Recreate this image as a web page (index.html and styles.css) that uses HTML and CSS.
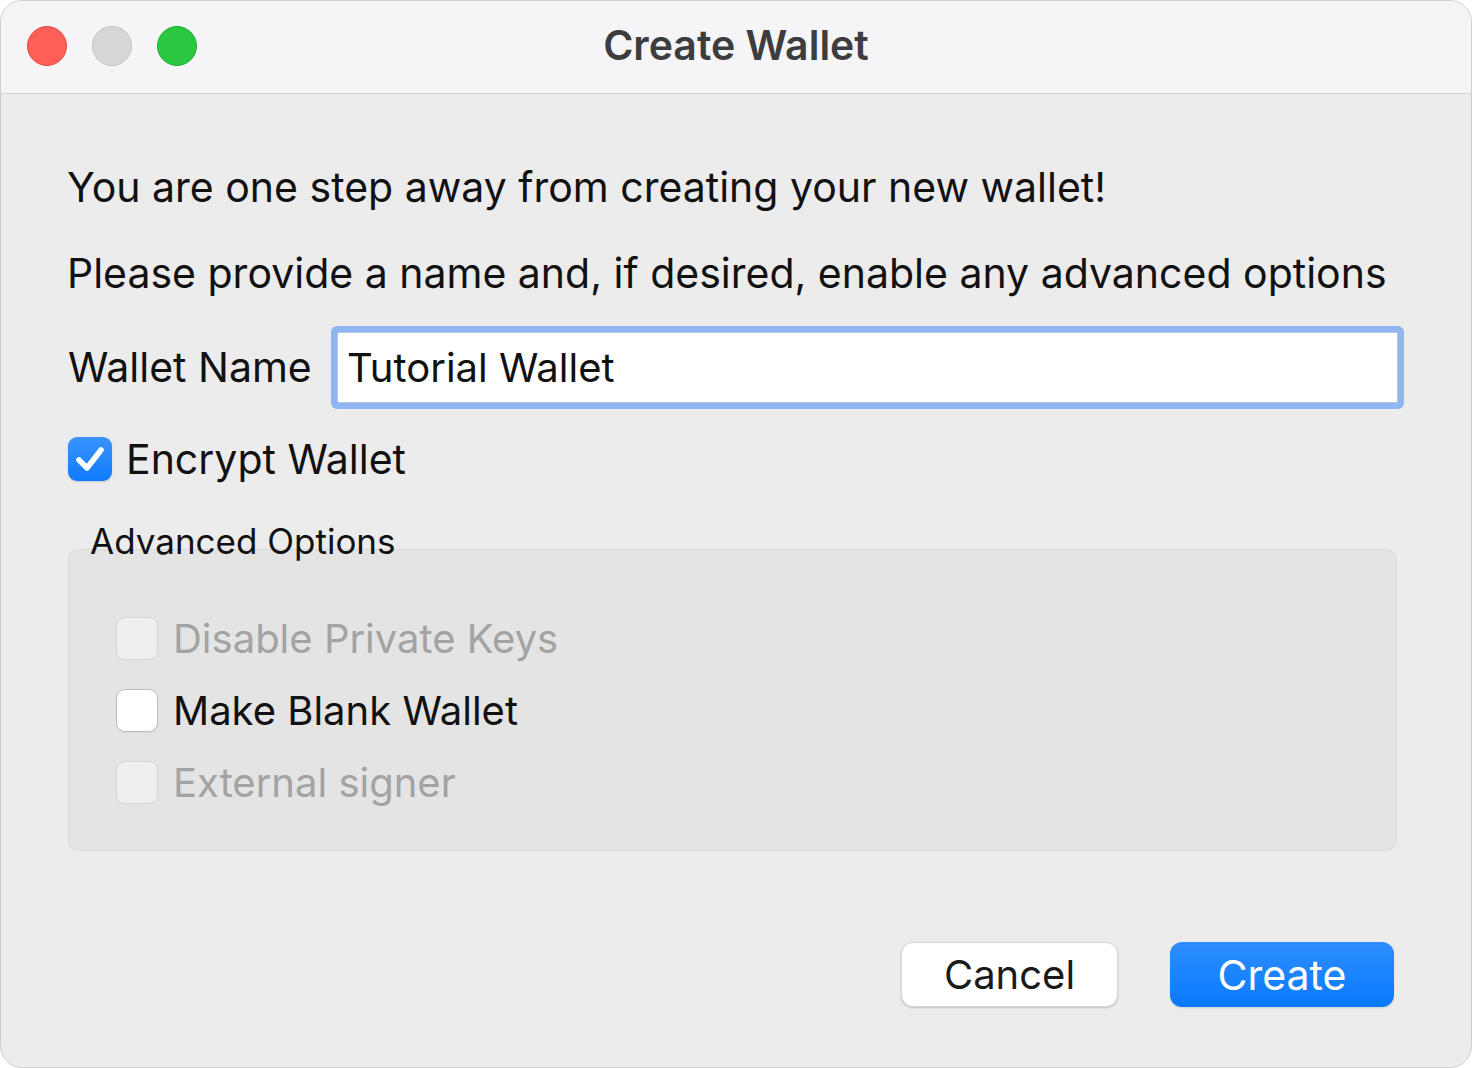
FILE: index.html
```html
<!DOCTYPE html>
<html lang="en">
<head>
<meta charset="utf-8">
<title>Create Wallet</title>
<link rel="stylesheet" href="styles.css">
</head>
<body>
<div class="window">
  <div class="titlebar">
    <div class="lights">
      <span class="light red"></span>
      <span class="light gray"></span>
      <span class="light green"></span>
    </div>
    <div class="title">Create Wallet</div>
  </div>
  <div class="content">
    <p class="line line1">You are one step away from creating your new wallet!</p>
    <p class="line line2">Please provide a name and, if desired, enable any advanced options</p>
    <div class="name-row">
      <span class="label">Wallet Name</span>
      <div class="input"><span class="input-text">Tutorial Wallet</span></div>
    </div>
    <div class="encrypt-row">
      <span class="check checked">
        <svg viewBox="0 0 44 44" width="44" height="44"><path d="M11 23 L19 31 L33 13" fill="none" stroke="#fff" stroke-width="5.5" stroke-linecap="round" stroke-linejoin="round"/></svg>
      </span>
      <span class="check-label">Encrypt Wallet</span>
    </div>
    <div class="group-title">Advanced Options</div>
    <div class="group">
      <div class="opt disabled"><span class="box"></span><span class="opt-label">Disable Private Keys</span></div>
      <div class="opt"><span class="box"></span><span class="opt-label">Make Blank Wallet</span></div>
      <div class="opt disabled"><span class="box"></span><span class="opt-label">External signer</span></div>
    </div>
    <div class="buttons">
      <div class="btn cancel">Cancel</div>
      <div class="btn create">Create</div>
    </div>
  </div>
</div>
</body>
</html>
```

FILE: styles.css
```css
html, body {
  margin: 0;
  padding: 0;
  background: #ffffff;
}
body {
  width: 1472px;
  height: 1068px;
  overflow: hidden;
  font-family: Inter, "Liberation Sans", Arial, sans-serif;
  color: #111;
}
.window {
  box-sizing: border-box;
  width: 1472px;
  height: 1068px;
  border: 1px solid #cfcfcf;
  border-radius: 22px;
  background: #ececec;
  overflow: hidden;
  display: flex;
  flex-direction: column;
}
.titlebar {
  height: 92px;
  flex: 0 0 92px;
  background: #f5f5f7;
  border-bottom: 1px solid #d3d3d3;
  display: flex;
  align-items: center;
  position: relative;
}
.lights {
  display: flex;
  gap: 25px;
  padding-left: 26px;
  padding-bottom: 2px;
}
.light {
  width: 40px;
  height: 40px;
  border-radius: 50%;
  box-sizing: border-box;
}
.red { background: #fe5f57; border: 1px solid #e24b41; }
.gray { background: #d7d7da; border: 1px solid #c3c3c6; }
.green { background: #29c840; border: 1px solid #1fae33; }
.title {
  position: absolute;
  left: 0;
  right: 0;
  top: 0;
  bottom: 4px;
  display: flex;
  align-items: center;
  justify-content: center;
  font-size: 41px;
  font-weight: 600;
  color: #3d3d3f;
  pointer-events: none;
}
.content {
  padding: 69px 74px 0 67px;
  display: flex;
  flex-direction: column;
}
.line {
  margin: 0 0 0 -1px;
  font-size: 41px;
  line-height: 48px;
  color: #111;
}
.line2 { margin-top: 38px; }
.name-row {
  margin-top: 28px;
  display: flex;
  align-items: center;
  height: 84px;
}
.label {
  font-size: 41px;
  width: 269px;
  flex: 0 0 269px;
}
.input {
  box-sizing: border-box;
  height: 71px;
  flex: 1;
  margin-right: -1px;
  background: #fff;
  border: 1px solid #b8c7e0;
  box-shadow: 0 0 0 6px #8fb5f2;
  border-radius: 2px;
  display: flex;
  align-items: center;
  padding-left: 9px;
}
.input-text {
  font-size: 40px;
  color: #111;
}
.encrypt-row {
  margin-top: 26px;
  height: 48px;
  display: flex;
  align-items: center;
  gap: 14px;
}
.check {
  width: 44px;
  height: 44px;
  border-radius: 9px;
  box-sizing: border-box;
  display: block;
}
.check svg { display: block; }
.checked {
  background: linear-gradient(#3a93ff, #0f7bfa);
  box-shadow: 0 1px 2px rgba(0,0,0,0.15);
}
.check-label {
  font-size: 41px;
}
.group-title {
  margin-top: 38px;
  padding-left: 22px;
  font-size: 35px;
  line-height: 40px;
  color: #111;
  position: relative;
  z-index: 1;
}
.group {
  margin-top: -12px;
  height: 302px;
  box-sizing: border-box;
  background: #e4e4e4;
  border: 1px solid #dadada;
  border-radius: 11px;
  padding: 52px 0 0 47px;
  display: flex;
  flex-direction: column;
}
.opt {
  height: 72px;
  display: flex;
  align-items: center;
  gap: 15px;
}
.box {
  width: 42px;
  height: 43px;
  box-sizing: border-box;
  border-radius: 9px;
  background: #fff;
  border: 1px solid #bdbdbd;
  box-shadow: 0 1px 1px rgba(0,0,0,0.06);
  display: block;
}
.opt-label {
  font-size: 40px;
  color: #111;
}
.disabled .box {
  background: #efefef;
  border-color: #d6d6d6;
  box-shadow: none;
}
.disabled .opt-label {
  color: #a3a3a3;
}
.buttons {
  margin-top: 91px;
  display: flex;
  justify-content: flex-end;
  gap: 52px;
  margin-right: 3px;
}
.btn {
  height: 65px;
  box-sizing: border-box;
  border-radius: 12px;
  display: flex;
  align-items: center;
  justify-content: center;
}
.cancel {
  width: 217px;
  font-size: 40px;
  background: #fff;
  border: 1px solid #d6d6d6;
  box-shadow: 0 1px 2px rgba(0,0,0,0.18);
  color: #1a1a1a;
}
.create {
  width: 224px;
  font-size: 41px;
  background: linear-gradient(#2f8eff, #087aff);
  color: #fff;
  box-shadow: 0 1px 2px rgba(0,0,0,0.12);
}
```
